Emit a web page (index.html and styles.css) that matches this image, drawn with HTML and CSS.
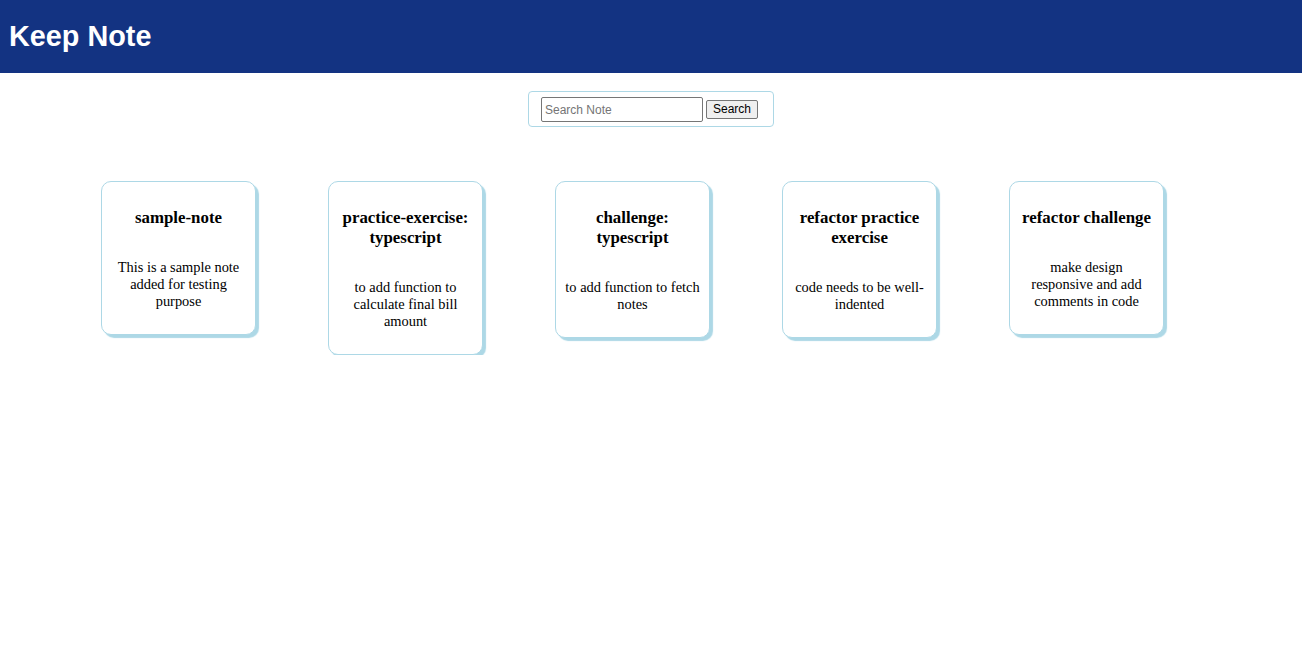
FILE: index.html
```html
<!DOCTYPE html>
<html lang="en">
<head>
<meta charset="utf-8">
<title>Keep Note</title>
<link rel="stylesheet" href="styles.css">
</head>
<body>
<header class="app-header">
  <h1 class="app-title">Keep Note</h1>
</header>
<main class="main">
  <div class="search-wrap">
    <form class="search-box">
      <input class="search-input" type="text" placeholder="Search Note">
      <button class="search-btn" type="button">Search</button>
    </form>
  </div>
  <section class="notes">
    <article class="note">
      <h3 class="note-title">sample-note</h3>
      <p class="note-text">This is a sample note added for testing purpose</p>
    </article>
    <article class="note">
      <h3 class="note-title">practice-exercise: typescript</h3>
      <p class="note-text">to add function to calculate final bill amount</p>
    </article>
    <article class="note">
      <h3 class="note-title">challenge: typescript</h3>
      <p class="note-text">to add function to fetch notes</p>
    </article>
    <article class="note">
      <h3 class="note-title">refactor practice exercise</h3>
      <p class="note-text">code needs to be well-indented</p>
    </article>
    <article class="note">
      <h3 class="note-title">refactor challenge</h3>
      <p class="note-text">make design responsive and add comments in code</p>
    </article>
  </section>
</main>
</body>
</html>
```

FILE: styles.css
```css
html, body {
  margin: 0;
  padding: 0;
  background: #ffffff;
}

body {
  font-family: "Liberation Serif", "Times New Roman", serif;
  color: #000;
}

.app-header {
  height: 73px;
  background: #133382;
  display: flex;
  align-items: center;
  padding: 0 9px;
  box-sizing: border-box;
}

.app-title {
  margin: 0;
  color: #ffffff;
  font-family: "Liberation Sans", Arial, sans-serif;
  font-weight: bold;
  font-size: 28.8px;
}

.search-wrap {
  display: flex;
  justify-content: center;
  margin-top: 18px;
}

.search-box {
  display: flex;
  align-items: center;
  gap: 3px;
  margin: 0;
  padding: 5px 15px 4px 12px;
  border: 1px solid #add8e6;
  border-radius: 4px;
}

.search-input {
  box-sizing: border-box;
  width: 162px;
  height: 25px;
  margin: 0;
  padding: 0 3px;
  border: 1px solid #767676;
  border-radius: 2px;
  font-family: "Liberation Sans", Arial, sans-serif;
  font-size: 12px;
  color: #000;
  background: #fff;
}

.search-input::placeholder {
  color: #757575;
}

.search-btn {
  box-sizing: border-box;
  width: 52px;
  height: 19px;
  margin: 0;
  padding: 0 5px;
  border: 1px solid #767676;
  border-radius: 2px;
  background: #efefef;
  font-family: "Liberation Sans", Arial, sans-serif;
  font-size: 12px;
  line-height: 17px;
  color: #000;
}

.notes {
  display: flex;
  align-items: flex-start;
  gap: 72px;
  padding-left: 101px;
  margin-top: 54px;
}

.note {
  box-sizing: border-box;
  width: 155px;
  display: flex;
  flex-direction: column;
  padding: 9px 9px 10px;
  border: 1px solid #add8e6;
  border-radius: 10px;
  box-shadow: 3px 3px 1px #add8e6;
  background: #fff;
  text-align: center;
}

.note-title {
  margin: 16.85px 0;
  font-size: 16.85px;
  line-height: 20px;
  font-weight: bold;
}

.note-text {
  margin: 14.4px 0;
  font-size: 14.4px;
  line-height: 17px;
}
```
